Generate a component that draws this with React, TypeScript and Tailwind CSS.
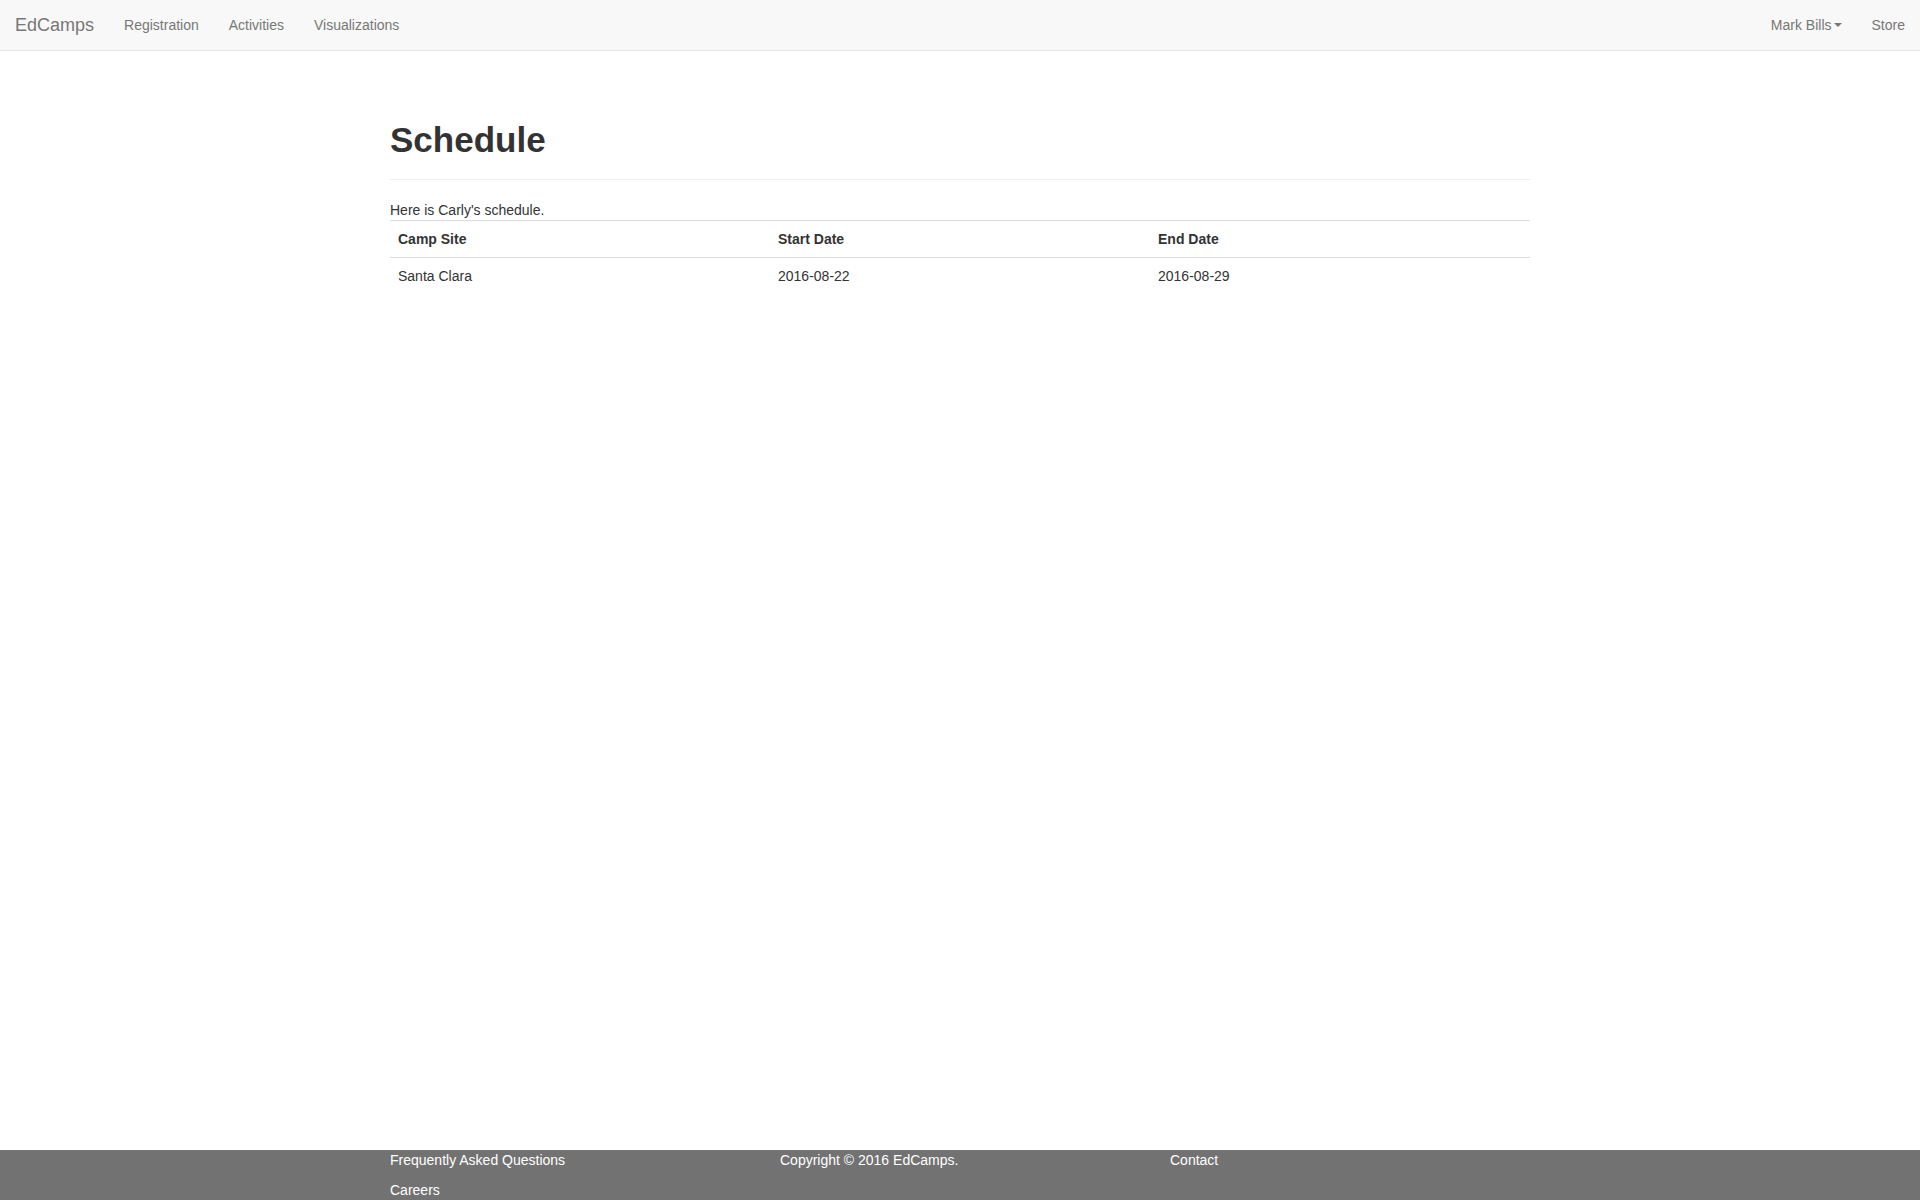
export default function App() {
  const rows = [{ site: "Santa Clara", start: "2016-08-22", end: "2016-08-29" }];

  return (
    <div className="flex min-h-screen flex-col bg-white font-['Liberation_Sans',Arial,sans-serif] text-[14px] leading-5 text-[#333]">
      <nav className="flex h-[51px] items-center justify-between border-b border-[#e7e7e7] bg-[#f8f8f8]">
        <div className="flex items-center">
          <a className="px-[15px] text-[18px] leading-5 text-[#777]">EdCamps</a>
          <a className="px-[15px] text-[#777]">Registration</a>
          <a className="px-[15px] text-[#777]">Activities</a>
          <a className="px-[15px] text-[#777]">Visualizations</a>
        </div>
        <div className="flex items-center">
          <a className="flex items-center px-[15px] text-[#777]">
            Mark Bills
            <span className="ml-[2px] inline-block h-0 w-0 border-x-[4px] border-t-[4px] border-x-transparent border-t-[#777]" />
          </a>
          <a className="px-[15px] text-[#777]">Store</a>
        </div>
      </nav>

      <main className="mx-auto w-[1170px] flex-1 px-[15px] pt-[69px]">
        <div className="mb-5 border-b border-[#eee] pb-[9px]">
          <h1 className="mb-[10px] text-[35px] font-bold leading-10 text-[#333]">Schedule</h1>
        </div>
        <p>Here is Carly's schedule.</p>
        <table className="w-full table-fixed border-collapse">
          <thead>
            <tr className="border-y border-[#ddd]">
              <th className="p-2 text-left font-bold">Camp Site</th>
              <th className="p-2 text-left font-bold">Start Date</th>
              <th className="p-2 text-left font-bold">End Date</th>
            </tr>
          </thead>
          <tbody>
            {rows.map((r) => (
              <tr key={r.site}>
                <td className="p-2">{r.site}</td>
                <td className="p-2">{r.start}</td>
                <td className="p-2">{r.end}</td>
              </tr>
            ))}
          </tbody>
        </table>
      </main>

      <footer className="h-[50px] bg-[#727272] text-white">
        <div className="mx-auto w-[1170px] px-[15px]">
          <div className="-mx-[15px] flex">
            <div className="flex w-1/3 flex-col gap-[10px] px-[15px]">
              <a>Frequently Asked Questions</a>
              <a>Careers</a>
            </div>
            <div className="w-1/3 px-[15px]">Copyright © 2016 EdCamps.</div>
            <div className="w-1/3 px-[15px]">
              <a>Contact</a>
            </div>
          </div>
        </div>
      </footer>
    </div>
  );
}
